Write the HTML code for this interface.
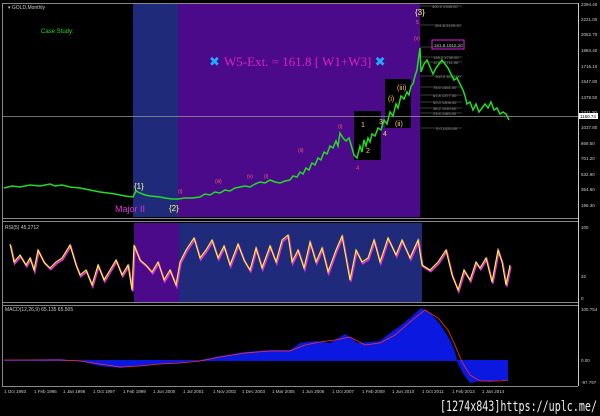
<!DOCTYPE html>
<html><head><meta charset="utf-8"><style>
html,body{margin:0;padding:0;background:#000;width:600px;height:416px;overflow:hidden}
svg{display:block}
text{font-family:"Liberation Sans",sans-serif}
text.serif{font-family:"Liberation Serif",serif}
text.wm{font-family:"DejaVu Sans Mono","Liberation Mono",monospace}
</style></head><body>
<svg width="600" height="416" viewBox="0 0 600 416" xmlns="http://www.w3.org/2000/svg">
<rect width="600" height="416" fill="#000"/>
<rect x="133" y="4" width="45" height="213" fill="#1f2a7a"/>
<rect x="178" y="4" width="242" height="213" fill="#4a0a8a"/>
<rect x="354" y="111" width="27" height="49" fill="#000"/>
<rect x="385" y="79" width="26" height="49" fill="#000"/>
<line x1="2" y1="3.5" x2="578" y2="3.5" stroke="#888" stroke-width="1"/>
<line x1="2.5" y1="3" x2="2.5" y2="386" stroke="#888"/>
<line x1="578.5" y1="3" x2="578.5" y2="386" stroke="#ccc"/>
<line x1="2" y1="218.5" x2="578" y2="218.5" stroke="#888"/>
<line x1="2" y1="221.5" x2="578" y2="221.5" stroke="#888"/>
<line x1="2" y1="302.5" x2="578" y2="302.5" stroke="#888"/>
<line x1="2" y1="305.5" x2="578" y2="305.5" stroke="#888"/>
<line x1="2" y1="386.5" x2="578" y2="386.5" stroke="#888"/>
<line x1="3" y1="116.5" x2="578" y2="116.5" stroke="#999" stroke-width="0.8"/>
<text x="8" y="9" font-size="5" fill="#ccc">▾ GOLD,Monthly</text>
<text x="41" y="33" font-size="6" fill="#22dd22">Case Study:</text>
<g stroke="#777" stroke-width="0.6">
<line x1="420" y1="6" x2="462" y2="6"/><line x1="420" y1="25" x2="462" y2="25"/>
<line x1="420" y1="47" x2="462" y2="47"/><line x1="420" y1="57" x2="462" y2="57"/>
<line x1="420" y1="62" x2="462" y2="62"/><line x1="420" y1="76" x2="462" y2="76"/>
<line x1="420" y1="87" x2="462" y2="87"/><line x1="420" y1="95" x2="462" y2="95"/>
<line x1="420" y1="102" x2="462" y2="102"/><line x1="420" y1="108" x2="462" y2="108"/>
<line x1="420" y1="113" x2="462" y2="113"/><line x1="420" y1="128" x2="462" y2="128"/>
</g>
<g font-size="4" fill="#999">
<text x="432" y="8">300.0 2345.00</text><text x="435" y="27">261.8 2129.10</text>
<text x="433" y="59">138.2 1730.00</text><text x="433" y="64">127.2 1711.00</text>
<text x="435" y="78">100.0 1630.00</text><text x="433" y="89">78.6 1461.00</text>
<text x="433" y="97">61.8 1377.00</text><text x="433" y="104">50.0 1306.00</text>
<text x="433" y="110">38.2 1240.00</text><text x="433" y="115">23.6 1165.00</text>
<text x="436" y="130">0.0 1025.00</text>
</g>
<rect x="432" y="40" width="32" height="9" fill="none" stroke="#e020e0" stroke-width="1"/>
<text x="434" y="47" font-size="4.5" fill="#bbb">161.8 1915.20</text>
<polyline fill="none" stroke="#22dd22" stroke-width="1.5" points="4,188 12,186 20,187 30,185 40,186 50,184 55,186 62,185 70,187 80,188 90,190 100,192 108,193 115,194 125,196 133,197 136,191 140,193 145,195 150,196 160,197 165,198 172,199 178,199 185,198 192,198 200,197 205,194 210,195 215,192 220,193 225,190 230,191 235,188 240,187 245,186 250,187 255,184 260,182 265,183 270,180 275,182 280,183 285,181 290,180 293,176 297,177 300,172 303,174 306,168 309,170 312,163 315,165 318,158 321,160 324,152 327,154 330,146 333,148 336,141 338,146 340,133 343,138 346,141 349,138 352,148 354,155 357,158 360,146 362,152 364,140 366,146 368,138 370,142 372,134 375,136 378,128 381,130 384,120 387,124 390,112 393,116 396,104 398,108 401,96 404,99 407,92 409,95 411,86 413,84 415,76 417,70 418,62 420,48 421,72 424,64 427,60 430,67 433,74 436,68 439,64 442,60 445,64 448,68 451,74 454,80 457,78 460,84 463,90 465,96 467,104 470,102 473,110 476,104 479,112 482,108 485,104 488,108 491,102 494,110 497,108 500,114 503,112 506,114 509,120"/>
<g font-size="8" fill="#ffff80">
<text x="134" y="189">{1}</text><text x="169" y="211">{2}</text><text x="415" y="15">{3}</text>
</g>
<text x="115" y="212" font-size="9" fill="#e030e0">Major II</text>
<g font-size="5" fill="#ff6060">
<text x="178" y="193">(i)</text><text x="215" y="183">(iii)</text><text x="247" y="178">(v)</text><text x="264" y="178">(i)</text><text x="298" y="152">(ii)</text><text x="338" y="128">(i)</text><text x="414" y="40">(v)</text><text x="416" y="24">5</text>
</g>
<g font-size="7" fill="#ffcc66">
<text x="361" y="127">1</text><text x="366" y="153">2</text><text x="379" y="124">3</text><text x="383" y="136">4</text><text x="388" y="101">(i)</text><text x="397" y="90">(iii)</text><text x="395" y="126">(ii)</text>
</g>
<text x="356" y="170" font-size="6" fill="#ff4040">4</text>
<text class="serif" x="209" y="66" font-size="13" fill="#e020c0"><tspan fill="#22aaff" style="font-family:'DejaVu Sans',sans-serif">✖ </tspan>W5-Ext. = 161.8 [ W1+W3] <tspan fill="#22aaff" style="font-family:'DejaVu Sans',sans-serif">✖</tspan></text>
<g font-size="4.5" fill="#ccc">
<text x="581" y="6">2394.40</text><text x="581" y="21">2221.00</text><text x="581" y="36">2052.70</text><text x="581" y="52">1884.40</text><text x="581" y="68">1716.10</text><text x="581" y="83">1547.80</text><text x="581" y="99">1379.50</text><text x="581" y="114">1211.20</text><text x="581" y="129">1037.80</text><text x="581" y="145">869.50</text><text x="581" y="160">701.20</text><text x="581" y="176">532.90</text><text x="581" y="191">364.60</text><text x="581" y="207">196.30</text>
</g>
<rect x="579" y="113" width="19" height="6" fill="#fff"/>
<text x="580" y="118" font-size="4.5" fill="#000">1160.74</text>
<rect x="134" y="223" width="45" height="79" fill="#4a0a8a"/>
<rect x="179" y="223" width="243" height="79" fill="#1f2a7a"/>
<text x="5" y="229" font-size="5" fill="#ccc">RSI(5) 45.2712</text>
<g font-size="4.5" fill="#ccc"><text x="581" y="229">100</text><text x="581" y="278">32</text><text x="581" y="300">0</text></g>
<polyline fill="none" stroke="#e030e0" stroke-width="1.8" transform="translate(0.8,1.5)" points="10,244 14,262 20,255 26,265 30,258 34,270 38,250 44,262 50,268 56,262 62,258 70,245 76,265 80,275 86,270 92,285 98,265 104,280 110,270 116,260 122,275 128,265 132,290 134,245 140,260 146,265 152,272 158,262 164,280 170,270 176,285 180,262 186,250 194,238 200,258 206,250 212,240 218,258 224,246 230,265 238,244 244,260 250,270 256,248 262,268 270,246 276,262 282,240 288,235 292,262 298,250 304,268 310,242 316,262 322,248 328,272 336,250 342,236 350,280 356,250 362,262 368,258 374,240 380,262 388,238 396,255 402,240 410,258 418,240 422,265 430,270 438,262 446,250 452,275 458,290 464,270 470,280 476,262 480,268 486,258 492,282 498,250 502,262 506,285 510,265"/>
<polyline fill="none" stroke="#ffff20" stroke-width="1.1" points="10,244 14,262 20,255 26,265 30,258 34,270 38,250 44,262 50,268 56,262 62,258 70,245 76,265 80,275 86,270 92,285 98,265 104,280 110,270 116,260 122,275 128,265 132,290 134,245 140,260 146,265 152,272 158,262 164,280 170,270 176,285 180,262 186,250 194,238 200,258 206,250 212,240 218,258 224,246 230,265 238,244 244,260 250,270 256,248 262,268 270,246 276,262 282,240 288,235 292,262 298,250 304,268 310,242 316,262 322,248 328,272 336,250 342,236 350,280 356,250 362,262 368,258 374,240 380,262 388,238 396,255 402,240 410,258 418,240 422,265 430,270 438,262 446,250 452,275 458,290 464,270 470,280 476,262 480,268 486,258 492,282 498,250 502,262 506,285 510,265"/>
<text x="5" y="311" font-size="5" fill="#ccc">MACD(12,26,9) 65.135 65.505</text>
<g font-size="4.5" fill="#ccc"><text x="581" y="311">100.754</text><text x="581" y="362">0.00</text><text x="581" y="384">-97.797</text></g>
<polygon fill="#0a18e0" points="4,360 60,359 80,361 100,366 120,368 140,366 160,364 180,363 200,360 220,356 245,352 270,350 290,350 300,343 315,341 330,343 345,334 352,338 357,343 370,342 380,341 390,333 400,326 410,318 421,308 430,313 440,324 450,340 455,352 458,364 464,375 470,383 480,381 490,382 500,380 508,381 508,360"/>
<line x1="4" y1="360.5" x2="508" y2="360.5" stroke="#0a18e0" stroke-width="1"/>
<polyline fill="none" stroke="#ff3030" stroke-width="0.8" points="4,360 60,360 80,361 100,364 120,367 140,366 160,364 180,363 200,361 220,357 245,353 270,351 290,351 305,345 320,342 335,340 350,337 365,345 380,343 395,335 410,322 425,310 438,318 448,330 455,345 462,362 470,375 480,381 500,381 508,380"/>
<g font-size="4.5" fill="#ccc">
<text x="4" y="393">1 Oct 1993</text><text x="34" y="393">1 Feb 1995</text><text x="63" y="393">1 Jan 1996</text><text x="93" y="393">1 Oct 1997</text><text x="123" y="393">1 Feb 1999</text><text x="153" y="393">1 Jun 2000</text><text x="183" y="393">1 Jul 2001</text><text x="213" y="393">1 Nov 2002</text><text x="242" y="393">1 Dec 2003</text><text x="272" y="393">1 Mar 2005</text><text x="302" y="393">1 Jun 2006</text><text x="332" y="393">1 Oct 2007</text><text x="362" y="393">1 Feb 2009</text><text x="392" y="393">1 Jun 2010</text><text x="422" y="393">1 Oct 2011</text><text x="452" y="393">1 Feb 2013</text><text x="482" y="393">1 Jan 2014</text>
</g>
<text class="wm" x="440" y="411" font-size="14" fill="#eee" textLength="157" lengthAdjust="spacingAndGlyphs">[1274x843]https://uplc.me/</text>
</svg>
</body></html>
